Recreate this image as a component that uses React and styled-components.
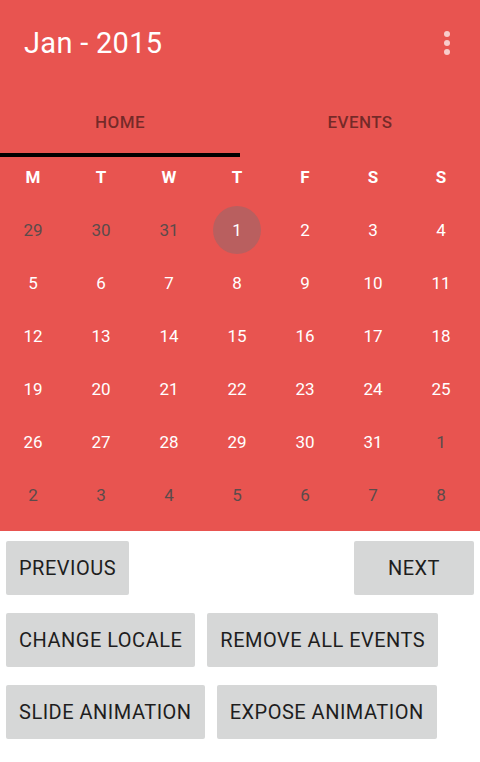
import React from 'react';
import styled, { createGlobalStyle } from 'styled-components';

const RED = '#e85450';

const GlobalStyle = createGlobalStyle`
  html, body {
    margin: 0;
    padding: 0;
    background: #fff;
    font-family: Roboto, "Noto Sans", sans-serif;
  }
`;

const Screen = styled.div`
  width: 480px;
  min-height: 762px;
  background: #fff;
`;

const Header = styled.div`
  background: ${RED};
`;

const Toolbar = styled.div`
  height: 85px;
  display: flex;
  align-items: center;
  justify-content: space-between;
  padding: 0 30px 0 24px;
`;

const Title = styled.h1`
  margin: 0;
  font-size: 29px;
  font-weight: 400;
  color: #fff;
  letter-spacing: 0.3px;
`;

const Overflow = styled.div`
  display: flex;
  flex-direction: column;
  gap: 3px;
`;

const Dot = styled.span`
  width: 6px;
  height: 6px;
  border-radius: 50%;
  background: rgba(255, 255, 255, 0.7);
`;

const Tabs = styled.div`
  display: flex;
  height: 72px;
`;

const Tab = styled.div`
  flex: 1;
  display: flex;
  align-items: center;
  justify-content: center;
  font-size: 17px;
  font-weight: 500;
  letter-spacing: 0.4px;
  color: rgba(0, 0, 0, 0.5);
  border-bottom: 4px solid ${(p) => (p.$active ? '#000' : 'transparent')};
  box-sizing: border-box;
  padding-top: 6px;
`;

const Calendar = styled.div`
  padding: 0 4px 10px 0;
  margin-left: -1px;
`;

const WeekRow = styled.div`
  display: grid;
  grid-template-columns: repeat(7, 68px);
  height: ${(p) => (p.$head ? '40px' : '53px')};
  margin-bottom: ${(p) => (p.$head ? '6px' : '0')};
`;

const DayName = styled.div`
  display: flex;
  align-items: center;
  justify-content: center;
  color: #fff;
  font-weight: 700;
  font-size: 17px;
`;

const Day = styled.div`
  display: flex;
  align-items: center;
  justify-content: center;
  font-size: 17px;
  color: ${(p) => (p.$other ? '#5b4b4b' : '#fff')};
`;

const Today = styled.span`
  width: 48px;
  height: 48px;
  border-radius: 50%;
  background: #b95f5f;
  display: flex;
  align-items: center;
  justify-content: center;
`;

const Controls = styled.div`
  padding: 10px 6px;
  display: flex;
  flex-direction: column;
  gap: 18px;
`;

const ButtonRow = styled.div`
  display: flex;
  gap: 12px;
  justify-content: ${(p) => (p.$spread ? 'space-between' : 'flex-start')};
`;

const Button = styled.button`
  height: 54px;
  min-width: ${(p) => (p.$wide ? '120px' : 'auto')};
  padding: 0 13px;
  border: none;
  border-radius: 2px;
  background: #d6d7d7;
  color: #1e1e1e;
  font-family: Roboto, "Noto Sans", sans-serif;
  font-size: 20px;
  font-weight: 400;
  letter-spacing: 0.5px;
  text-transform: uppercase;
`;

const dayNames = ['M', 'T', 'W', 'T', 'F', 'S', 'S'];

function buildWeeks() {
  const cells = [29, 30, 31].map((d) => ({ d, other: true }));
  for (let d = 1; d <= 31; d++) cells.push({ d, other: false, today: d === 1 });
  let n = 1;
  while (cells.length < 42) cells.push({ d: n++, other: true });
  const weeks = [];
  for (let i = 0; i < 42; i += 7) weeks.push(cells.slice(i, i + 7));
  return weeks;
}

export default function App() {
  const weeks = buildWeeks();
  return (
    <Screen>
      <GlobalStyle />
      <Header>
        <Toolbar>
          <Title>Jan - 2015</Title>
          <Overflow>
            <Dot />
            <Dot />
            <Dot />
          </Overflow>
        </Toolbar>
        <Tabs>
          <Tab $active>HOME</Tab>
          <Tab>EVENTS</Tab>
        </Tabs>
        <Calendar>
          <WeekRow $head>
            {dayNames.map((n, i) => (
              <DayName key={i}>{n}</DayName>
            ))}
          </WeekRow>
          {weeks.map((w, wi) => (
            <WeekRow key={wi}>
              {w.map((c, ci) => (
                <Day key={ci} $other={c.other}>
                  {c.today ? <Today>{c.d}</Today> : c.d}
                </Day>
              ))}
            </WeekRow>
          ))}
        </Calendar>
      </Header>
      <Controls>
        <ButtonRow $spread>
          <Button>Previous</Button>
          <Button $wide>Next</Button>
        </ButtonRow>
        <ButtonRow>
          <Button>Change Locale</Button>
          <Button>Remove All Events</Button>
        </ButtonRow>
        <ButtonRow>
          <Button>Slide Animation</Button>
          <Button>Expose Animation</Button>
        </ButtonRow>
      </Controls>
    </Screen>
  );
}
